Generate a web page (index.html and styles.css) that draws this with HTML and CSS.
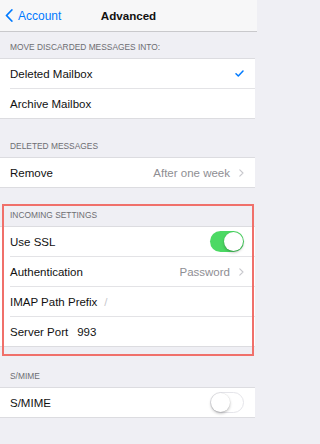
FILE: index.html
```html
<!DOCTYPE html>
<html>
<head>
<meta charset="utf-8">
<link rel="stylesheet" href="styles.css">
</head>
<body>
<div class="nav">
  <div class="back">
    <svg class="back-chev" width="8" height="13" viewBox="0 0 8 13"><path d="M6.8 1 L1.5 6.5 L6.8 12" fill="none" stroke="#007aff" stroke-width="1.8" stroke-linecap="round" stroke-linejoin="round"/></svg>
    <span>Account</span>
  </div>
  <div class="title">Advanced</div>
</div>

<div class="header h1">MOVE DISCARDED MESSAGES INTO:</div>
<div class="group">
  <div class="row"><div class="inner sep"><span class="label">Deleted Mailbox</span><svg class="check" width="9" height="7" viewBox="0 0 9 7"><path d="M1 3.8 L3.3 6 L8 1" fill="none" stroke="#007aff" stroke-width="1.5" stroke-linecap="round" stroke-linejoin="round"/></svg></div></div>
  <div class="row"><div class="inner"><span class="label">Archive Mailbox</span></div></div>
</div>

<div class="header h2">DELETED MESSAGES</div>
<div class="group">
  <div class="row"><div class="inner"><span class="label">Remove</span><span class="value">After one week</span><svg class="chev" width="5" height="8" viewBox="0 0 5 8"><path d="M0.8 0.8 L4 4 L0.8 7.2" fill="none" stroke="#c7c7cc" stroke-width="1.1" stroke-linecap="round" stroke-linejoin="round"/></svg></div></div>
</div>

<div class="section-hl">
  <div class="header h3">INCOMING SETTINGS</div>
  <div class="group">
    <div class="row"><div class="inner sep"><span class="label">Use SSL</span><span class="toggle on"><span class="knob"></span></span></div></div>
    <div class="row"><div class="inner sep"><span class="label">Authentication</span><span class="value">Password</span><svg class="chev" width="5" height="8" viewBox="0 0 5 8"><path d="M0.8 0.8 L4 4 L0.8 7.2" fill="none" stroke="#c7c7cc" stroke-width="1.1" stroke-linecap="round" stroke-linejoin="round"/></svg></div></div>
    <div class="row"><div class="inner sep"><span class="label">IMAP Path Prefix</span><span class="field placeholder">/</span></div></div>
    <div class="row"><div class="inner"><span class="label">Server Port</span><span class="field">993</span></div></div>
  </div>
</div>

<div class="header h4">S/MIME</div>
<div class="group">
  <div class="row"><div class="inner"><span class="label">S/MIME</span><span class="toggle off"><span class="knob"></span></span></div></div>
</div>
</body>
</html>
```

FILE: styles.css
```css
html, body {
  margin: 0;
  padding: 0;
}
body {
  background: #efeff4;
  font-family: "Liberation Sans", Arial, sans-serif;
  color: #111;
  width: 257px;
  height: 444px;
  overflow: hidden;
}
.nav {
  height: 31px;
  background: #f7f7f8;
  border-bottom: 1px solid #c9c9cc;
  display: flex;
  align-items: center;
  justify-content: center;
  position: relative;
}
.back {
  position: absolute;
  left: 5px;
  top: 0;
  bottom: 0;
  display: flex;
  align-items: center;
  gap: 5px;
  color: #007aff;
  font-size: 12px;
}
.back-chev {
  display: block;
}
.title {
  font-size: 11.6px;
  font-weight: bold;
  color: #111;
}
.header {
  display: flex;
  align-items: flex-end;
  padding: 0 0 5px 10px;
  box-sizing: border-box;
  font-size: 8.4px;
  line-height: 11px;
  color: #6d6d72;
}
.h1 { height: 24px; }
.h2 { height: 38px; }
.h3 { height: 38px; }
.h4 { height: 40px; }
.h1 { height: 26px; }
.group {
  background: #fff;
  border-top: 1px solid #dcdce0;
  border-bottom: 1px solid #dcdce0;
  margin-right: 2px;
}
.row {
  padding-left: 10px;
}
.inner {
  height: 29px;
  display: flex;
  align-items: center;
  padding-right: 11px;
}
.inner.sep {
  border-bottom: 1px solid #e3e3e6;
}
.label {
  font-size: 11.5px;
  color: #111;
  flex: none;
}
.value {
  margin-left: auto;
  font-size: 11.5px;
  color: #8e8e93;
}
.chev {
  margin-left: 9px;
  display: block;
}
.check {
  margin-left: auto;
  display: block;
}
.field {
  font-size: 11.5px;
  color: #111;
  margin-left: 9px;
}
.field.placeholder {
  color: #c7c7cd;
  margin-left: 7px;
}
.toggle {
  margin-left: auto;
  width: 34px;
  height: 21px;
  border-radius: 11px;
  box-sizing: border-box;
  position: relative;
  flex: none;
}
.toggle.on {
  background: #4cd964;
}
.toggle.off {
  background: #fff;
  border: 1px solid #e5e5ea;
}
.knob {
  position: absolute;
  top: 1px;
  width: 19px;
  height: 19px;
  border-radius: 50%;
  background: #fff;
  box-shadow: 0 1.5px 3px rgba(0,0,0,0.25), 0 0 0 0.5px rgba(0,0,0,0.06);
}
.toggle.on .knob {
  right: 1px;
}
.toggle.off .knob {
  top: 0;
  left: 0;
}
.section-hl {
  position: relative;
}
.section-hl::after {
  content: "";
  position: absolute;
  left: 2px;
  right: 3px;
  top: 16px;
  bottom: -9px;
  border: 2px solid #f0706a;
  pointer-events: none;
}
```
